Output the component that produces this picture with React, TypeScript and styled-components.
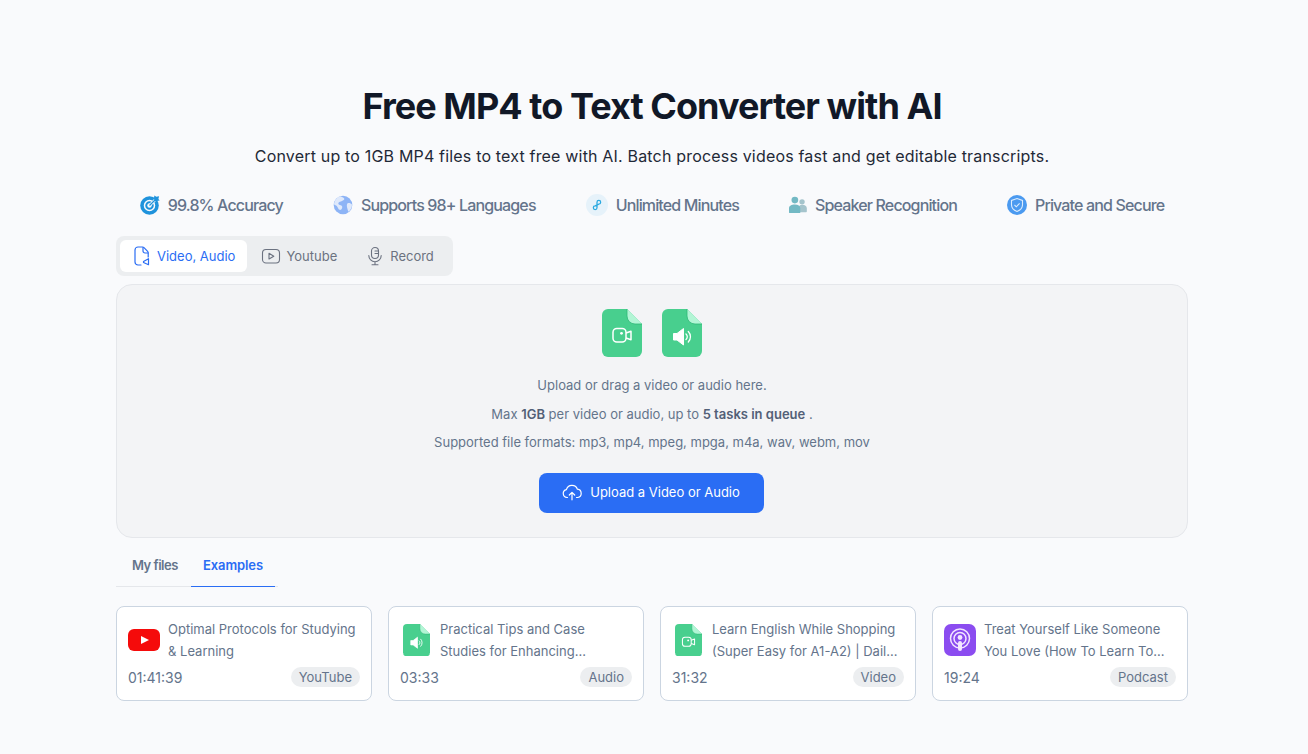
import styled, { createGlobalStyle } from 'styled-components';

const GlobalStyle = createGlobalStyle`
  html, body {
    margin: 0;
    padding: 0;
    background: #f9fafc;
  }
  body {
    font-family: Inter, "Liberation Sans", sans-serif;
  }
`;

function FileShape({ size, children }: { size: number; children: React.ReactNode }) {
  return (
    <svg width={size} height={size * 1.2} viewBox="0 0 40 48" fill="none">
      <path d="M6 0h19l15 15v27a6 6 0 0 1-6 6H6a6 6 0 0 1-6-6V6a6 6 0 0 1 6-6z" fill="#48cf8e" />
      <path d="M25 0l15 15h-7a8 8 0 0 1-8-8z" fill="#b2f5d5" />
      <path d="M25 0v7a8 8 0 0 0 8 8h7" stroke="#2fb877" strokeWidth="0.8" />
      {children}
    </svg>
  );
}

function VideoFile({ size }: { size: number }) {
  return (
    <FileShape size={size}>
      <rect x="11" y="19.500" width="13" height="13.500" rx="3.800" stroke="#fff" strokeWidth="1.500" />
      <circle cx="19.500" cy="24.300" r="1.400" fill="#fff" />
      <path d="M24 24l5-1.800v8.600l-5-1.800" stroke="#fff" strokeWidth="1.500" strokeLinejoin="round" />
    </FileShape>
  );
}

function AudioFile({ size }: { size: number }) {
  return (
    <FileShape size={size}>
      <path d="M11.500 24.500h3.500l6.500-5v16.500l-6.500-5h-3.500z" fill="#fff" stroke="#fff" strokeWidth="1" strokeLinejoin="round" />
      <path d="M24 25a3.600 3.600 0 0 1 0 5.500M26.300 22.500a7.500 7.500 0 0 1 0 10.500" stroke="#fff" strokeWidth="1.300" strokeLinecap="round" />
    </FileShape>
  );
}

function YoutubeLogo() {
  return (
    <svg width="32" height="24" viewBox="0 0 32 24">
      <rect x="0" y="1" width="32" height="22" rx="6" fill="#f50b0b" />
      <path d="M13 8l8 4-8 4z" fill="#fff" />
    </svg>
  );
}

function PodcastLogo() {
  return (
    <svg width="32" height="32" viewBox="0 0 32 32" fill="none">
      <rect width="32" height="32" rx="7" fill="#8b4cf0" />
      <circle cx="16" cy="14.500" r="9.500" stroke="#f3e6ff" strokeWidth="1.500" />
      <circle cx="16" cy="14.500" r="6" stroke="#f3e6ff" strokeWidth="1.500" />
      <circle cx="16" cy="13.500" r="2.400" fill="#f3e6ff" />
      <rect x="14" y="17" width="4" height="10" rx="2" fill="#f3e6ff" />
    </svg>
  );
}

function TargetIcon() {
  return (
    <svg width="20" height="20" viewBox="0 0 20 20" fill="none">
      <circle cx="9.500" cy="10.500" r="9.300" fill="#1f93dc" />
      <circle cx="9.500" cy="10.500" r="5" stroke="#f9fafc" strokeWidth="1.500" />
      <circle cx="9.500" cy="10.500" r="2.200" fill="#f9fafc" />
      <path d="M10 10l5.500-5.500" stroke="#f9fafc" strokeWidth="2.600" />
      <path d="M9.500 10.500l6-6" stroke="#1f93dc" strokeWidth="1.200" />
      <path d="M14 3l.4-2.600 1.900 1.300 2.800-.4-.7 2.700 1.300 1.600-2.900.5-2.300.2z" fill="#1f93dc" />
    </svg>
  );
}

function GlobeIcon() {
  return (
    <svg width="20" height="20" viewBox="0 0 20 20">
      <circle cx="10" cy="10" r="9.300" fill="#8db4f6" />
      <path d="M7 1.200c2 1 3.500 1 4.200 2.200.6 1.200-1 2-2.200 2.600C7.600 6.800 6 6.500 5.400 8c-.5 1.400 1 2 2.400 2.300 1.500.3 1.800 1.700 1.200 3-.5 1.200-1.500 2-2.500 1.500-1.300-.7-1.500-2.600-2.600-3.600C3 10.200 1.800 10 1 9.500 1.300 5.600 3.700 2.400 7 1.200z" fill="#dfe9fb" />
      <path d="M15 8c1.400-.4 3 .2 4 1.500 0 3-1.300 5.500-3.300 7.200-1-1-1-2.500-1.500-3.800C13.800 11.300 13.500 8.500 15 8z" fill="#dfe9fb" />
    </svg>
  );
}

function InfinityIcon() {
  return (
    <svg width="22" height="22" viewBox="0 0 24 24" fill="none">
      <circle cx="12" cy="12" r="12" fill="#e6f2fa" />
      <path d="M12 15A2 2 0 1 1 10 13L14 11A2 2 0 1 0 12 9V15" stroke="#2aa9e0" strokeWidth="1.400" />
    </svg>
  );
}

function PeopleIcon() {
  return (
    <svg width="18" height="18" viewBox="0 0 20 20">
      <circle cx="14.500" cy="6.500" r="3" fill="#a5c4cc" />
      <path d="M11 18h8a.8.8 0 0 0 .8-.8v-3.700c0-2.300-2.200-3.700-5-3.700s-3.800 1-3.800 3z" fill="#a5c4cc" />
      <circle cx="6.500" cy="4.500" r="3.700" fill="#73b9c4" />
      <path d="M0 13.500C0 10.800 2.800 9.500 6.500 9.500s6 1.300 6 4v5.500H1a1 1 0 0 1-1-1z" fill="#73b9c4" />
    </svg>
  );
}

function ShieldIcon() {
  return (
    <svg width="20" height="20" viewBox="0 0 20 20" fill="none">
      <circle cx="10" cy="10" r="10" fill="#4b9af0" />
      <path d="M10 3.500l5.500 2v4.300c0 3.300-2.300 5.500-5.500 6.700-3.200-1.200-5.500-3.400-5.500-6.700V5.500z" stroke="#dcecfd" strokeWidth="1.100" />
      <path d="M7.500 10l1.800 1.800 3.300-3.400" stroke="#dcecfd" strokeWidth="1.100" />
    </svg>
  );
}

function TabFileIcon() {
  return (
    <svg width="20" height="20" viewBox="0 0 20 20" fill="none" stroke="#2a6df4" strokeWidth="1.200" strokeLinecap="round" strokeLinejoin="round">
      <path d="M9 19H6a3 3 0 0 1-3-3V4a3 3 0 0 1 3-3h4.500a2 2 0 0 1 1.500.6l3.600 3.800c.4.400.6.900.6 1.400V11" />
      <path d="M11 1.500V5a2 2 0 0 0 2 2h3" />
      <path d="M11.500 15.500l5-2.800v6l-5-2.200z" />
    </svg>
  );
}

function TabVideoIcon() {
  return (
    <svg width="20" height="20" viewBox="0 0 20 20" fill="none" stroke="#6b7280" strokeWidth="1.100" strokeLinejoin="round">
      <rect x="1.500" y="3.500" width="17" height="13.500" rx="3.500" />
      <path d="M8 7.300l4.800 2.900L8 13z" />
    </svg>
  );
}

function TabMicIcon() {
  return (
    <svg width="20" height="20" viewBox="0 0 20 20" fill="none" stroke="#6b7280" strokeWidth="1.100" strokeLinecap="round">
      <rect x="6.500" y="1.500" width="7" height="11" rx="3.500" />
      <path d="M3.800 9.500a6.200 6.200 0 0 0 12.400 0M10 15.700v3M7 18.700h6M10 5h3.500M10 7.500h3.500" />
    </svg>
  );
}

function CloudIcon() {
  return (
    <svg width="20" height="18" viewBox="0 0 20 18" fill="none" stroke="#fff" strokeWidth="1.200" strokeLinecap="round" strokeLinejoin="round">
      <path d="M5.500 14.500H5a4 4 0 0 1-.6-7.900 5.800 5.800 0 0 1 11-.4 4.200 4.200 0 0 1 .4 8.300h-1.300" />
      <path d="M10 16.800V9.500M7.300 12l2.700-2.700 2.700 2.700" />
    </svg>
  );
}

const features = [
  { label: '99.8% Accuracy', icon: <TargetIcon /> },
  { label: 'Supports 98+ Languages', icon: <GlobeIcon /> },
  { label: 'Unlimited Minutes', icon: <InfinityIcon /> },
  { label: 'Speaker Recognition', icon: <PeopleIcon /> },
  { label: 'Private and Secure', icon: <ShieldIcon /> },
];

const examples = [
  { title: 'Optimal Protocols for Studying & Learning', time: '01:41:39', tag: 'YouTube', icon: <YoutubeLogo /> },
  { title: 'Practical Tips and Case Studies for Enhancing...', time: '03:33', tag: 'Audio', icon: <AudioFile size={27} /> },
  { title: 'Learn English While Shopping (Super Easy for A1-A2) | Dail...', time: '31:32', tag: 'Video', icon: <VideoFile size={27} /> },
  { title: 'Treat Yourself Like Someone You Love (How To Learn To...', time: '19:24', tag: 'Podcast', icon: <PodcastLogo /> },
];

export default function App() {
  return (
    <>
      <GlobalStyle />
      <Page>
        <Title>Free MP4 to Text Converter with AI</Title>
        <Subtitle>Convert up to 1GB MP4 files to text free with AI. Batch process videos fast and get editable transcripts.</Subtitle>

        <Features>
          {features.map((f) => (
            <Feature key={f.label}>
              {f.icon}
              {f.label}
            </Feature>
          ))}
        </Features>

        <Tabs>
          <Tab $active>
            <TabFileIcon />
            Video, Audio
          </Tab>
          <Tab>
            <TabVideoIcon />
            Youtube
          </Tab>
          <Tab>
            <TabMicIcon />
            Record
          </Tab>
        </Tabs>

        <Dropzone>
          <FileIcons>
            <VideoFile size={40} />
            <AudioFile size={40} />
          </FileIcons>
          <Hint>Upload or drag a video or audio here.</Hint>
          <Hint>
            Max <b>1GB</b> per video or audio, up to <b>5 tasks in queue</b> .
          </Hint>
          <Hint>Supported file formats: mp3, mp4, mpeg, mpga, m4a, wav, webm, mov</Hint>
          <UploadButton>
            <CloudIcon />
            Upload a Video or Audio
          </UploadButton>
        </Dropzone>

        <FileTabs>
          <FileTab $first>My files</FileTab>
          <FileTab $active>Examples</FileTab>
        </FileTabs>

        <Cards>
          {examples.map((ex) => (
            <Card key={ex.tag}>
              <CardTop>
                <CardIcon>{ex.icon}</CardIcon>
                <CardTitle>{ex.title}</CardTitle>
              </CardTop>
              <CardBottom>
                <Time>{ex.time}</Time>
                <Tag>{ex.tag}</Tag>
              </CardBottom>
            </Card>
          ))}
        </Cards>
      </Page>
    </>
  );
}

const Page = styled.main`
  width: 1072px;
  margin-left: 116px;
  padding-top: 84px;
  display: flex;
  flex-direction: column;
  min-height: 670px;
`;

const Title = styled.h1`
  margin: 0;
  font-size: 36px;
  line-height: 44px;
  font-weight: 700;
  letter-spacing: -0.94px;
  color: #111827;
  text-align: center;
`;

const Subtitle = styled.p`
  margin: 16px 0 0;
  font-size: 16px;
  line-height: 24px;
  letter-spacing: 0.18px;
  color: #1f2937;
  text-align: center;
`;

const Features = styled.div`
  display: flex;
  justify-content: center;
  align-items: center;
  gap: 50px;
  margin-top: 25px;
  height: 24px;
`;

const Feature = styled.div`
  display: flex;
  align-items: center;
  gap: 8px;
  font-size: 16px;
  font-weight: 500;
  letter-spacing: -0.85px;
  color: #64748b;
  white-space: nowrap;
`;

const Tabs = styled.div`
  display: flex;
  align-self: flex-start;
  gap: 2px;
  margin-top: 19px;
  padding: 4px 7px 4px 4px;
  background: #eceef0;
  border-radius: 8px;
`;

const Tab = styled.div<{ $active?: boolean }>`
  display: flex;
  align-items: center;
  gap: 5px;
  height: 32px;
  box-sizing: border-box;
  padding: 0 12px 1px;
  border-radius: 6px;
  font-size: 13px;
  color: ${({ $active }) => ($active ? '#2a6df4' : '#6b7280')};
  background: ${({ $active }) => ($active ? '#fff' : 'transparent')};

  &:last-child {
    margin-left: 2px;
  }
`;

const Dropzone = styled.section`
  display: flex;
  flex-direction: column;
  align-items: center;
  height: 254px;
  box-sizing: border-box;
  margin-top: 8px;
  padding-top: 24px;
  background: #f3f4f6;
  border: 1px solid #e5e7eb;
  border-radius: 16px;
`;

const FileIcons = styled.div`
  display: flex;
  gap: 20px;
  margin-bottom: 14px;
`;

const Hint = styled.p`
  margin: 0;
  font-size: 13px;
  line-height: 28.500px;
  color: #64748b;

  b {
    font-weight: 600;
    color: #526077;
  }
`;

const UploadButton = styled.button`
  display: flex;
  align-items: center;
  justify-content: center;
  gap: 8px;
  width: 225px;
  height: 40px;
  margin: 16px 2px 0 0;
  padding: 0 0 1px;
  border: none;
  border-radius: 8px;
  background: #2a6df4;
  color: #fff;
  font-family: inherit;
  font-size: 13px;
`;

const FileTabs = styled.div`
  display: flex;
  height: 48px;
  width: 162px;
  border-bottom: 1px solid #e5e7eb;
`;

const FileTab = styled.div<{ $active?: boolean; $first?: boolean }>`
  display: flex;
  align-items: center;
  box-sizing: border-box;
  flex: 0 0 ${({ $first }) => ($first ? '75px' : '84px')};
  padding: 6px 0 0 ${({ $first }) => ($first ? '16px' : '12px')};
  margin-bottom: -1px;
  font-size: 13px;
  font-weight: 600;
  letter-spacing: ${({ $first }) => ($first ? '-0.5px' : '-0.1px')};
  white-space: nowrap;
  color: ${({ $active }) => ($active ? '#2a6df4' : '#64748b')};
  border-bottom: 1px solid ${({ $active }) => ($active ? '#2a6df4' : 'transparent')};
`;

const Cards = styled.div`
  display: grid;
  grid-template-columns: repeat(4, 256px);
  gap: 16px;
  margin-top: 19px;
`;

const Card = styled.article`
  box-sizing: border-box;
  height: 95px;
  padding: 11px 11px 0;
  background: #fff;
  border: 1px solid #cbd5e1;
  border-radius: 8px;
`;

const CardTop = styled.div`
  display: flex;
  align-items: center;
  gap: 8px;
`;

const CardIcon = styled.div`
  flex: none;
  width: 32px;
  display: flex;
  justify-content: center;
`;

const CardTitle = styled.div`
  font-size: 13px;
  line-height: 22px;
  color: #64748b;
`;

const CardBottom = styled.div`
  display: flex;
  align-items: center;
  justify-content: space-between;
  margin-top: 5px;
`;

const Time = styled.span`
  font-size: 14px;
  color: #64748b;
`;

const Tag = styled.span`
  padding: 2px 8px;
  border-radius: 10px;
  background: #eceef0;
  font-size: 13px;
  line-height: 16px;
  color: #64748b;
`;
